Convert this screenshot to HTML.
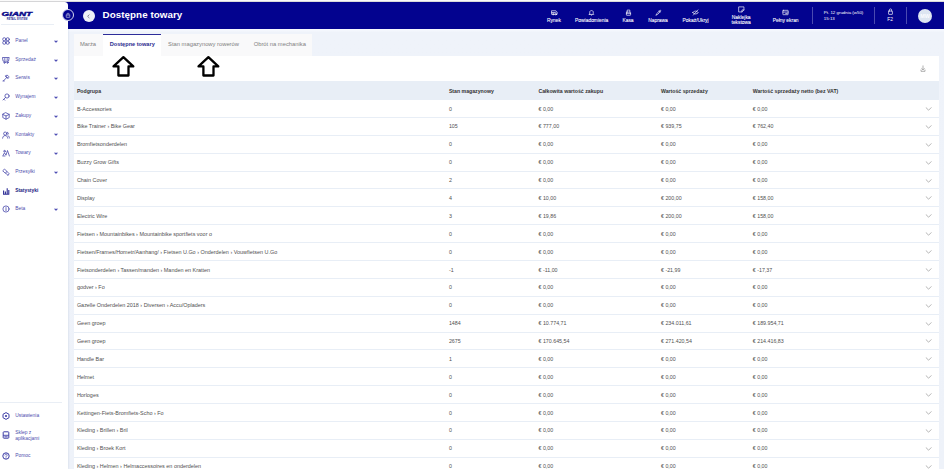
<!DOCTYPE html>
<html><head><meta charset="utf-8">
<style>
*{box-sizing:border-box;margin:0;padding:0}
html,body{width:944px;height:469px;overflow:hidden;background:#fafafa;font-family:"Liberation Sans",sans-serif}
.abs{position:absolute}
#topline{position:absolute;left:0;top:1px;width:944px;height:1px;background:#d9d9d9}
#header{position:absolute;left:60px;top:2px;width:884px;height:26.5px;background:#03038f}
#main{position:absolute;left:68px;top:28.5px;width:876px;height:441px;background:linear-gradient(#f8faff 0px,#f4f7fd 1.5px,#eff3fa 3.5px,#eef2f9 100%)}
#sidebar{position:absolute;left:0;top:2px;width:67.8px;height:467px;background:#fff;border-top-right-radius:3.5px;box-shadow:0.5px 0 2px rgba(20,40,110,0.07)}
.logo{position:absolute;left:1px;top:7px}
.divider{position:absolute;height:1px;background:#e9eef5}
.mi{position:absolute;left:0;width:68px;height:10px}
.mi .t{position:absolute;left:15.2px;top:0;font-size:4.9px;line-height:10px;color:#4e4eae;white-space:nowrap}
.mi svg.ic{position:absolute;left:2px;top:1px;width:8px;height:8px}
.mi svg.dn{position:absolute;left:53.8px;top:3.9px;width:4px;height:3px;overflow:visible}
.title{position:absolute;left:102.6px;top:9.4px;font-size:9.8px;letter-spacing:0.05px;font-weight:bold;color:#fff;white-space:nowrap;line-height:12px}
.hb{position:absolute;text-align:center;color:#fff;font-size:4.9px;font-weight:normal;-webkit-text-stroke:0.08px #fff;white-space:nowrap;line-height:4.6px}
.hb svg{display:block;margin:0 auto}
.vdiv{position:absolute;top:7px;width:0.8px;height:17px;background:#4a4ab0}
#tabs{position:absolute;left:73.7px;top:33.7px;height:21.9px;width:238.8px;background:#f9f9fa}
.tab{position:absolute;top:0;height:21.9px;font-size:5.8px;line-height:21.4px;color:#7f7f7f;white-space:nowrap}
.tab.active{background:#fff;color:#2b2b8f;font-weight:bold;font-size:5.6px;border-top:1.8px solid #2d2d9a;line-height:19px}
#card{position:absolute;left:73.7px;top:55.5px;width:865.1px;height:420px;background:#fff}
#thead{position:absolute;left:73.7px;top:81.2px;width:865.1px;height:18.6px;background:#e8eef6}
#thead span{position:absolute;top:0.5px;line-height:18.6px;font-size:5.2px;font-weight:bold;color:#333;white-space:nowrap}
.row{position:absolute;left:73.7px;width:865.1px;height:17.88px;border-bottom:1px solid #e8eef6}
.row span{position:absolute;top:0.5px;line-height:17.6px;font-size:5.3px;color:#505050;white-space:nowrap}
.c0{left:3.2px;font-size:5.45px!important}.c1{left:375.2px}.c2{left:464.8px}.c3{left:587.3px}.c4{left:679.1px}
.chev{position:absolute;left:851.4px;top:6.9px;width:7.2px;height:4px}
</style></head><body>
<div id="topline"></div>
<div id="header"></div>
<div id="main"></div>
<div id="sidebar">
  <svg class="logo" width="34" height="13" viewBox="0 0 34 13">
    <text x="0.6" y="6.8" font-family="Liberation Sans" font-weight="bold" font-style="italic" font-size="6" fill="#0a0a8a" stroke="#0a0a8a" stroke-width="0.4" textLength="30.5" lengthAdjust="spacingAndGlyphs">GIANT</text>
    <text x="5.8" y="11.4" font-family="Liberation Sans" font-weight="bold" font-size="2.7" fill="#1a1a90" textLength="20.5" lengthAdjust="spacingAndGlyphs">RETAIL SYSTEM</text>
  </svg>
  <div class="divider" style="left:1px;top:22.3px;width:53px"></div>
  <div class="mi" style="top:33.90px"><svg class="ic" viewBox="0 0 8 8"><circle cx="2.3" cy="2.3" r="1.6" fill="none" stroke="#3d3da6" stroke-width="0.75" stroke-linecap="round" stroke-linejoin="round"/><circle cx="5.7" cy="2.3" r="1.6" fill="none" stroke="#3d3da6" stroke-width="0.75" stroke-linecap="round" stroke-linejoin="round"/><circle cx="2.3" cy="5.7" r="1.6" fill="none" stroke="#3d3da6" stroke-width="0.75" stroke-linecap="round" stroke-linejoin="round"/><circle cx="5.7" cy="5.7" r="1.6" fill="none" stroke="#3d3da6" stroke-width="0.75" stroke-linecap="round" stroke-linejoin="round"/></svg><span class="t">Panel</span><svg class="dn" viewBox="0 0 4 3"><path d="M0.6 0.7L2 2.2L3.4 0.7" fill="none" stroke="#5050b4" stroke-width="1.1" stroke-linejoin="round"/></svg></div>
<div class="mi" style="top:52.62px"><svg class="ic" viewBox="0 0 8 8"><path d="M0.8 1.5H7.2L6.5 5.2H1.5Z M2.8 2.5V4.2 M5.2 2.5V4.2" fill="none" stroke="#3d3da6" stroke-width="0.75" stroke-linecap="round" stroke-linejoin="round"/><circle cx="2.5" cy="6.6" r="0.7" fill="none" stroke="#3d3da6" stroke-width="0.75" stroke-linecap="round" stroke-linejoin="round"/><circle cx="5.5" cy="6.6" r="0.7" fill="none" stroke="#3d3da6" stroke-width="0.75" stroke-linecap="round" stroke-linejoin="round"/></svg><span class="t">Sprzedaż</span><svg class="dn" viewBox="0 0 4 3"><path d="M0.6 0.7L2 2.2L3.4 0.7" fill="none" stroke="#5050b4" stroke-width="1.1" stroke-linejoin="round"/></svg></div>
<div class="mi" style="top:71.34px"><svg class="ic" viewBox="0 0 8 8"><path d="M1.5 6.8L5 3.3 M4 2.3L5.7 4 M4.3 1.3C5.5 0.6 7.3 2.3 6.7 3.6L5.8 4.5L3.5 2.2Z M1 7L2.3 7" fill="none" stroke="#3d3da6" stroke-width="0.75" stroke-linecap="round" stroke-linejoin="round"/></svg><span class="t">Serwis</span><svg class="dn" viewBox="0 0 4 3"><path d="M0.6 0.7L2 2.2L3.4 0.7" fill="none" stroke="#5050b4" stroke-width="1.1" stroke-linejoin="round"/></svg></div>
<div class="mi" style="top:90.06px"><svg class="ic" viewBox="0 0 8 8"><circle cx="5" cy="3" r="2.1" fill="none" stroke="#3d3da6" stroke-width="0.75" stroke-linecap="round" stroke-linejoin="round"/><path d="M3.5 4.5L1 7 M1.8 6.2L2.8 7.2" fill="none" stroke="#3d3da6" stroke-width="0.75" stroke-linecap="round" stroke-linejoin="round"/></svg><span class="t">Wynajem</span><svg class="dn" viewBox="0 0 4 3"><path d="M0.6 0.7L2 2.2L3.4 0.7" fill="none" stroke="#5050b4" stroke-width="1.1" stroke-linejoin="round"/></svg></div>
<div class="mi" style="top:108.78px"><svg class="ic" viewBox="0 0 8 8"><path d="M4 0.8L7.2 2.4V5.6L4 7.2L0.8 5.6V2.4Z M0.8 2.4L4 4L7.2 2.4 M4 4V7.2" fill="none" stroke="#3d3da6" stroke-width="0.75" stroke-linecap="round" stroke-linejoin="round"/></svg><span class="t">Zakupy</span><svg class="dn" viewBox="0 0 4 3"><path d="M0.6 0.7L2 2.2L3.4 0.7" fill="none" stroke="#5050b4" stroke-width="1.1" stroke-linejoin="round"/></svg></div>
<div class="mi" style="top:127.50px"><svg class="ic" viewBox="0 0 8 8"><circle cx="3.2" cy="2.6" r="1.6" fill="none" stroke="#3d3da6" stroke-width="0.75" stroke-linecap="round" stroke-linejoin="round"/><path d="M0.6 7.2C0.8 5.3 1.8 4.6 3.2 4.6C4.6 4.6 5.6 5.3 5.8 7.2 M5.3 1.2C6.6 1.3 6.9 3.3 5.6 3.9 M6.3 4.8C7 5.2 7.4 6 7.5 7" fill="none" stroke="#3d3da6" stroke-width="0.75" stroke-linecap="round" stroke-linejoin="round"/></svg><span class="t">Kontakty</span><svg class="dn" viewBox="0 0 4 3"><path d="M0.6 0.7L2 2.2L3.4 0.7" fill="none" stroke="#5050b4" stroke-width="1.1" stroke-linejoin="round"/></svg></div>
<div class="mi" style="top:146.22px"><svg class="ic" viewBox="0 0 8 8"><path d="M0.7 7L2.5 3.8L4 6.2L5.5 1.5L7.4 7 M1.5 7H3" fill="none" stroke="#3d3da6" stroke-width="0.75" stroke-linecap="round" stroke-linejoin="round"/><circle cx="2.5" cy="2.2" r="0.8" fill="none" stroke="#3d3da6" stroke-width="0.75" stroke-linecap="round" stroke-linejoin="round"/></svg><span class="t">Towary</span><svg class="dn" viewBox="0 0 4 3"><path d="M0.6 0.7L2 2.2L3.4 0.7" fill="none" stroke="#5050b4" stroke-width="1.1" stroke-linejoin="round"/></svg></div>
<div class="mi" style="top:164.94px"><svg class="ic" viewBox="0 0 8 8"><path d="M1 2.5L2.5 1L5 3.5L3.5 5Z M3.5 5L6 7.3 M5 3.5L7.2 5.8L6 7.3" fill="none" stroke="#3d3da6" stroke-width="0.75" stroke-linecap="round" stroke-linejoin="round"/></svg><span class="t">Przesyłki</span><svg class="dn" viewBox="0 0 4 3"><path d="M0.6 0.7L2 2.2L3.4 0.7" fill="none" stroke="#5050b4" stroke-width="1.1" stroke-linejoin="round"/></svg></div>
<div class="mi" style="top:183.66px"><svg class="ic" viewBox="0 0 8 8"><path d="M1 7.3H7.3 M1.6 7V3.5 M3.4 7V4.6 M5.2 7V1.2 M6.8 7V3" fill="none" stroke="#2e2e96" stroke-width="1.1"/></svg><span class="t" style="font-weight:bold;color:#20207f">Statystyki</span></div>
<div class="mi" style="top:202.38px"><svg class="ic" viewBox="0 0 8 8"><circle cx="4" cy="4" r="3.1" fill="none" stroke="#3d3da6" stroke-width="0.75" stroke-linecap="round" stroke-linejoin="round"/><path d="M4 3.5V5.6 M4 2.3V2.4" fill="none" stroke="#3d3da6" stroke-width="0.75" stroke-linecap="round" stroke-linejoin="round"/></svg><span class="t">Beta</span><svg class="dn" viewBox="0 0 4 3"><path d="M0.6 0.7L2 2.2L3.4 0.7" fill="none" stroke="#5050b4" stroke-width="1.1" stroke-linejoin="round"/></svg></div>
  <div class="divider" style="left:0;top:400px;width:62px"></div>
  <div class="mi" style="top:409.00px"><svg class="ic" style="left:2px" viewBox="0 0 8 8"><path d="M4 0.6L7 2.3V5.7L4 7.4L1 5.7V2.3Z" fill="none" stroke="#3d3da6" stroke-width="1"/><circle cx="4" cy="4" r="1.1" fill="#3d3da6"/></svg><span class="t">Ustawienia</span></div>
<div class="mi" style="top:428.30px"><svg class="ic" viewBox="0 0 8 8"><rect x="1.2" y="0.8" width="5.6" height="6.4" rx="0.7" fill="none" stroke="#3d3da6" stroke-width="1"/><path d="M1.2 4.3H6.8 M2.4 5.8H5.6" fill="none" stroke="#3d3da6" stroke-width="0.9"/></svg><span class="t" style="line-height:5.2px;top:0">Sklep z<br>aplikacjami</span></div>
<div class="mi" style="top:448.50px"><svg class="ic" viewBox="0 0 8 8"><circle cx="4" cy="4" r="3.2" fill="none" stroke="#3d3da6" stroke-width="1"/><path d="M2.8 3C2.8 1.7 5.2 1.7 5.2 3C5.2 3.9 4 3.9 4 4.8 M4 6V6.1" fill="none" stroke="#3d3da6" stroke-width="0.75" stroke-linecap="round" stroke-linejoin="round"/></svg><span class="t">Pomoc</span></div>
</div>
<div class="abs" style="left:62.2px;top:9.3px;width:12.2px;height:12.2px;border-radius:50%;background:#03038f;border:0.7px solid #d4d7ee"></div>
<svg class="abs" style="left:65.3px;top:12.3px" width="6" height="6.4" viewBox="0 0 8 8"><rect x="1.6" y="2.8" width="4.8" height="4.4" rx="0.6" fill="none" stroke="#c9cbe6" stroke-width="0.8"/><path d="M2.9 2.8V1.5H5.1V2.8 M1.6 4.8H6.4" fill="none" stroke="#c9cbe6" stroke-width="0.7"/></svg>
<div class="abs" style="left:82.8px;top:9.6px;width:12px;height:12px;border-radius:50%;background:#eef0f7"></div>
<svg class="abs" style="left:86.3px;top:13.6px" width="5" height="5" viewBox="0 0 5 5"><path d="M3.4 0.6L1.6 2.3L3.4 4" fill="none" stroke="#6d6d7e" stroke-width="0.8"/></svg>
<div class="title">Dostępne towary</div>
<svg class="abs" style="left:550.5px;top:9.1px" width="7" height="7" viewBox="0 0 8 8"><path d="M1 2H5.5L6.5 3.5H7V6H1Z M1 4H5" fill="none" stroke="#fff" stroke-width="0.75" stroke-linecap="round" stroke-linejoin="round"/><circle cx="2.5" cy="6" r="0.8" fill="none" stroke="#fff" stroke-width="0.75" stroke-linecap="round" stroke-linejoin="round"/><circle cx="5.5" cy="6" r="0.8" fill="none" stroke="#fff" stroke-width="0.75" stroke-linecap="round" stroke-linejoin="round"/></svg><div class="hb" style="left:529.0px;width:50px;top:18.8px">Rynek</div>
<svg class="abs" style="left:588.2px;top:9.1px" width="7" height="7" viewBox="0 0 8 8"><path d="M2 5.5V3.5C2 1.2 6 1.2 6 3.5V5.5L6.6 6.2H1.4Z M3.3 6.8C3.5 7.4 4.5 7.4 4.7 6.8" fill="none" stroke="#fff" stroke-width="0.75" stroke-linecap="round" stroke-linejoin="round"/></svg><div class="hb" style="left:566.7px;width:50px;top:18.8px">Powiadomienia</div>
<svg class="abs" style="left:624.5px;top:9.1px" width="7" height="7" viewBox="0 0 8 8"><rect x="1.6" y="3.6" width="4.8" height="3.6" rx="0.5" fill="none" stroke="#fff" stroke-width="0.75" stroke-linecap="round" stroke-linejoin="round"/><path d="M2.5 3.6V1.2H5.5V3.6 M1.6 5.3H6.4" fill="none" stroke="#fff" stroke-width="0.75" stroke-linecap="round" stroke-linejoin="round"/></svg><div class="hb" style="left:603.0px;width:50px;top:18.8px">Kasa</div>
<svg class="abs" style="left:654.5px;top:9.1px" width="7" height="7" viewBox="0 0 8 8"><path d="M1.2 6.8L2.2 5.2L5.4 1.6C6 1 7 1.8 6.5 2.5L3.2 6Z M4.6 2.4L5.8 3.5" fill="none" stroke="#fff" stroke-width="0.75" stroke-linecap="round" stroke-linejoin="round"/></svg><div class="hb" style="left:633.0px;width:50px;top:18.8px">Naprawa</div>
<svg class="abs" style="left:692.1px;top:9.1px" width="7" height="7" viewBox="0 0 8 8"><path d="M0.8 4.2C2.5 1.8 5.5 1.8 7.2 4.2C5.5 6.2 2.5 6.2 0.8 4.2Z M1.5 7L6.8 1" fill="none" stroke="#fff" stroke-width="0.75" stroke-linecap="round" stroke-linejoin="round"/></svg><div class="hb" style="left:670.6px;width:50px;top:18.8px">Pokaż/Ukryj</div>
<svg class="abs" style="left:737.7px;top:6.4px" width="7" height="7" viewBox="0 0 8 8"><path d="M1.2 1H6.8V4.5L4.5 6.8H1.2Z M4.5 6.8V4.5H6.8" fill="none" stroke="#fff" stroke-width="0.75" stroke-linecap="round" stroke-linejoin="round"/></svg><div class="hb" style="left:716.2px;width:50px;top:16.4px">Naklejka</div><div class="hb" style="left:716.2px;width:50px;top:20.6px">tekstowa</div>
<svg class="abs" style="left:782.2px;top:9.1px" width="7" height="7" viewBox="0 0 8 8"><rect x="1" y="1.5" width="6" height="5" rx="0.4" fill="none" stroke="#fff" stroke-width="0.75" stroke-linecap="round" stroke-linejoin="round"/><path d="M1 3.5H7 M4.2 5.2H6" fill="none" stroke="#fff" stroke-width="0.75" stroke-linecap="round" stroke-linejoin="round"/></svg><div class="hb" style="left:760.7px;width:50px;top:18.8px">Pełny ekran</div>
<div class="vdiv" style="left:812.4px"></div>
<div class="vdiv" style="left:874.2px"></div>
<div class="vdiv" style="left:906.2px"></div>
<div class="abs" style="left:823.8px;top:10.1px;color:#fff;font-size:4.4px;line-height:5.4px;white-space:nowrap">Pt. 12 grudnia (w50)<br>15:13</div>
<svg class="abs" style="left:886.7px;top:8.2px" width="7" height="7" viewBox="0 0 8 8"><rect x="1.8" y="3.5" width="4.4" height="3.8" rx="0.4" fill="none" stroke="#fff" stroke-width="0.75" stroke-linecap="round" stroke-linejoin="round"/><path d="M2.7 3.5V2.2C2.7 0.6 5.3 0.6 5.3 2.2V3.5" fill="none" stroke="#fff" stroke-width="0.75" stroke-linecap="round" stroke-linejoin="round"/></svg>
<div class="hb" style="left:880px;width:20px;top:17.5px;font-weight:normal;-webkit-text-stroke:0">F2</div>
<div class="abs" style="left:918px;top:8.5px;width:14px;height:14px;border-radius:50%;background:#dde5f1;color:#fbfcff;font-size:5.4px;font-weight:bold;letter-spacing:-0.1px;line-height:14px;text-align:center">MW</div>
<div id="card"></div>
<div id="tabs">
  <div class="tab" style="left:6.3px">Marża</div>
  <div class="tab active" style="left:29.1px;width:58.3px;padding-left:6.9px">Dostępne towary</div>
  <div class="tab" style="left:94.4px">Stan magazynowy rowerów</div>
  <div class="tab" style="left:180px">Obrót na mechanika</div>
</div>
<svg class="abs" style="left:0.0px;top:0" width="944" height="90" viewBox="0 0 944 90"><path d="M123.4 57.2L133.3 66.4H128.5V75.5H118.4V66.4H113.5Z" fill="none" stroke="#000" stroke-width="2.3" stroke-linejoin="round"/></svg><svg class="abs" style="left:85.4px;top:0" width="944" height="90" viewBox="0 0 944 90"><path d="M123.4 57.2L133.3 66.4H128.5V75.5H118.4V66.4H113.5Z" fill="none" stroke="#000" stroke-width="2.3" stroke-linejoin="round"/></svg>
<svg class="abs" style="left:918.3px;top:63.3px" width="10" height="10" viewBox="0 0 10 10"><path d="M5 2.5V6.8M3.4 5.3L5 6.9L6.6 5.3M3 6.6V8.3H7V6.6" fill="none" stroke="#8d8d8d" stroke-width="0.7"/></svg>
<div id="thead"><span style="left:3.2px">Podgrupa</span><span style="left:375.2px">Stan magazynowy</span><span style="left:464.8px">Całkowita wartość zakupu</span><span style="left:587.3px">Wartość sprzedaży</span><span style="left:679.1px">Wartość sprzedaży netto (bez VAT)</span></div>
<div class="row" style="top:100.10px"><span class="c0">B-Accessories</span><span class="c1">0</span><span class="c2">€ 0,00</span><span class="c3">€ 0,00</span><span class="c4">€ 0,00</span><svg class="chev" viewBox="0 0 8 5"><path d="M0.5 0.5L4 4L7.5 0.5" fill="none" stroke="#8a8a8a" stroke-width="0.8"/></svg></div>
<div class="row" style="top:117.98px"><span class="c0">Bike Trainer › Bike Gear</span><span class="c1">105</span><span class="c2">€ 777,00</span><span class="c3">€ 939,75</span><span class="c4">€ 762,40</span><svg class="chev" viewBox="0 0 8 5"><path d="M0.5 0.5L4 4L7.5 0.5" fill="none" stroke="#8a8a8a" stroke-width="0.8"/></svg></div>
<div class="row" style="top:135.86px"><span class="c0">Bromfietsonderdelen</span><span class="c1">0</span><span class="c2">€ 0,00</span><span class="c3">€ 0,00</span><span class="c4">€ 0,00</span><svg class="chev" viewBox="0 0 8 5"><path d="M0.5 0.5L4 4L7.5 0.5" fill="none" stroke="#8a8a8a" stroke-width="0.8"/></svg></div>
<div class="row" style="top:153.74px"><span class="c0">Buzzy Grow Gifts</span><span class="c1">0</span><span class="c2">€ 0,00</span><span class="c3">€ 0,00</span><span class="c4">€ 0,00</span><svg class="chev" viewBox="0 0 8 5"><path d="M0.5 0.5L4 4L7.5 0.5" fill="none" stroke="#8a8a8a" stroke-width="0.8"/></svg></div>
<div class="row" style="top:171.62px"><span class="c0">Chain Cover</span><span class="c1">2</span><span class="c2">€ 0,00</span><span class="c3">€ 0,00</span><span class="c4">€ 0,00</span><svg class="chev" viewBox="0 0 8 5"><path d="M0.5 0.5L4 4L7.5 0.5" fill="none" stroke="#8a8a8a" stroke-width="0.8"/></svg></div>
<div class="row" style="top:189.50px"><span class="c0">Display</span><span class="c1">4</span><span class="c2">€ 10,00</span><span class="c3">€ 200,00</span><span class="c4">€ 158,00</span><svg class="chev" viewBox="0 0 8 5"><path d="M0.5 0.5L4 4L7.5 0.5" fill="none" stroke="#8a8a8a" stroke-width="0.8"/></svg></div>
<div class="row" style="top:207.38px"><span class="c0">Electric Wire</span><span class="c1">3</span><span class="c2">€ 19,86</span><span class="c3">€ 200,00</span><span class="c4">€ 158,00</span><svg class="chev" viewBox="0 0 8 5"><path d="M0.5 0.5L4 4L7.5 0.5" fill="none" stroke="#8a8a8a" stroke-width="0.8"/></svg></div>
<div class="row" style="top:225.26px"><span class="c0">Fietsen › Mountainbikes › Mountainbike sportfiets voor o</span><span class="c1">0</span><span class="c2">€ 0,00</span><span class="c3">€ 0,00</span><span class="c4">€ 0,00</span><svg class="chev" viewBox="0 0 8 5"><path d="M0.5 0.5L4 4L7.5 0.5" fill="none" stroke="#8a8a8a" stroke-width="0.8"/></svg></div>
<div class="row" style="top:243.14px"><span class="c0">Fietsen/Frames/Hometr/Aanhang/ › Fietsen U.Go › Onderdelen › Vouwfietsen U.Go</span><span class="c1">0</span><span class="c2">€ 0,00</span><span class="c3">€ 0,00</span><span class="c4">€ 0,00</span><svg class="chev" viewBox="0 0 8 5"><path d="M0.5 0.5L4 4L7.5 0.5" fill="none" stroke="#8a8a8a" stroke-width="0.8"/></svg></div>
<div class="row" style="top:261.02px"><span class="c0">Fietsonderdelen › Tassen/manden › Manden en Kratten</span><span class="c1">-1</span><span class="c2">€ -11,00</span><span class="c3">€ -21,99</span><span class="c4">€ -17,37</span><svg class="chev" viewBox="0 0 8 5"><path d="M0.5 0.5L4 4L7.5 0.5" fill="none" stroke="#8a8a8a" stroke-width="0.8"/></svg></div>
<div class="row" style="top:278.90px"><span class="c0">godver › Fo</span><span class="c1">0</span><span class="c2">€ 0,00</span><span class="c3">€ 0,00</span><span class="c4">€ 0,00</span><svg class="chev" viewBox="0 0 8 5"><path d="M0.5 0.5L4 4L7.5 0.5" fill="none" stroke="#8a8a8a" stroke-width="0.8"/></svg></div>
<div class="row" style="top:296.78px"><span class="c0">Gazelle Onderdelen 2018 › Diversen › Accu/Opladers</span><span class="c1">0</span><span class="c2">€ 0,00</span><span class="c3">€ 0,00</span><span class="c4">€ 0,00</span><svg class="chev" viewBox="0 0 8 5"><path d="M0.5 0.5L4 4L7.5 0.5" fill="none" stroke="#8a8a8a" stroke-width="0.8"/></svg></div>
<div class="row" style="top:314.66px"><span class="c0">Geen groep</span><span class="c1">1484</span><span class="c2">€ 10.774,71</span><span class="c3">€ 234.011,61</span><span class="c4">€ 189.954,71</span><svg class="chev" viewBox="0 0 8 5"><path d="M0.5 0.5L4 4L7.5 0.5" fill="none" stroke="#8a8a8a" stroke-width="0.8"/></svg></div>
<div class="row" style="top:332.54px"><span class="c0">Geen groep</span><span class="c1">2675</span><span class="c2">€ 170.645,54</span><span class="c3">€ 271.420,54</span><span class="c4">€ 214.416,83</span><svg class="chev" viewBox="0 0 8 5"><path d="M0.5 0.5L4 4L7.5 0.5" fill="none" stroke="#8a8a8a" stroke-width="0.8"/></svg></div>
<div class="row" style="top:350.42px"><span class="c0">Handle Bar</span><span class="c1">1</span><span class="c2">€ 0,00</span><span class="c3">€ 0,00</span><span class="c4">€ 0,00</span><svg class="chev" viewBox="0 0 8 5"><path d="M0.5 0.5L4 4L7.5 0.5" fill="none" stroke="#8a8a8a" stroke-width="0.8"/></svg></div>
<div class="row" style="top:368.30px"><span class="c0">Helmet</span><span class="c1">0</span><span class="c2">€ 0,00</span><span class="c3">€ 0,00</span><span class="c4">€ 0,00</span><svg class="chev" viewBox="0 0 8 5"><path d="M0.5 0.5L4 4L7.5 0.5" fill="none" stroke="#8a8a8a" stroke-width="0.8"/></svg></div>
<div class="row" style="top:386.18px"><span class="c0">Horloges</span><span class="c1">0</span><span class="c2">€ 0,00</span><span class="c3">€ 0,00</span><span class="c4">€ 0,00</span><svg class="chev" viewBox="0 0 8 5"><path d="M0.5 0.5L4 4L7.5 0.5" fill="none" stroke="#8a8a8a" stroke-width="0.8"/></svg></div>
<div class="row" style="top:404.06px"><span class="c0">Kettingen-Fiets-Bromfiets-Scho › Fo</span><span class="c1">0</span><span class="c2">€ 0,00</span><span class="c3">€ 0,00</span><span class="c4">€ 0,00</span><svg class="chev" viewBox="0 0 8 5"><path d="M0.5 0.5L4 4L7.5 0.5" fill="none" stroke="#8a8a8a" stroke-width="0.8"/></svg></div>
<div class="row" style="top:421.94px"><span class="c0">Kleding › Brillen › Bril</span><span class="c1">0</span><span class="c2">€ 0,00</span><span class="c3">€ 0,00</span><span class="c4">€ 0,00</span><svg class="chev" viewBox="0 0 8 5"><path d="M0.5 0.5L4 4L7.5 0.5" fill="none" stroke="#8a8a8a" stroke-width="0.8"/></svg></div>
<div class="row" style="top:439.82px"><span class="c0">Kleding › Broek Kort</span><span class="c1">0</span><span class="c2">€ 0,00</span><span class="c3">€ 0,00</span><span class="c4">€ 0,00</span><svg class="chev" viewBox="0 0 8 5"><path d="M0.5 0.5L4 4L7.5 0.5" fill="none" stroke="#8a8a8a" stroke-width="0.8"/></svg></div>
<div class="row" style="top:457.70px"><span class="c0">Kleding › Helmen › Helmaccessoires en onderdelen</span><span class="c1">0</span><span class="c2">€ 0,00</span><span class="c3">€ 0,00</span><span class="c4">€ 0,00</span><svg class="chev" viewBox="0 0 8 5"><path d="M0.5 0.5L4 4L7.5 0.5" fill="none" stroke="#8a8a8a" stroke-width="0.8"/></svg></div>
</body></html>
